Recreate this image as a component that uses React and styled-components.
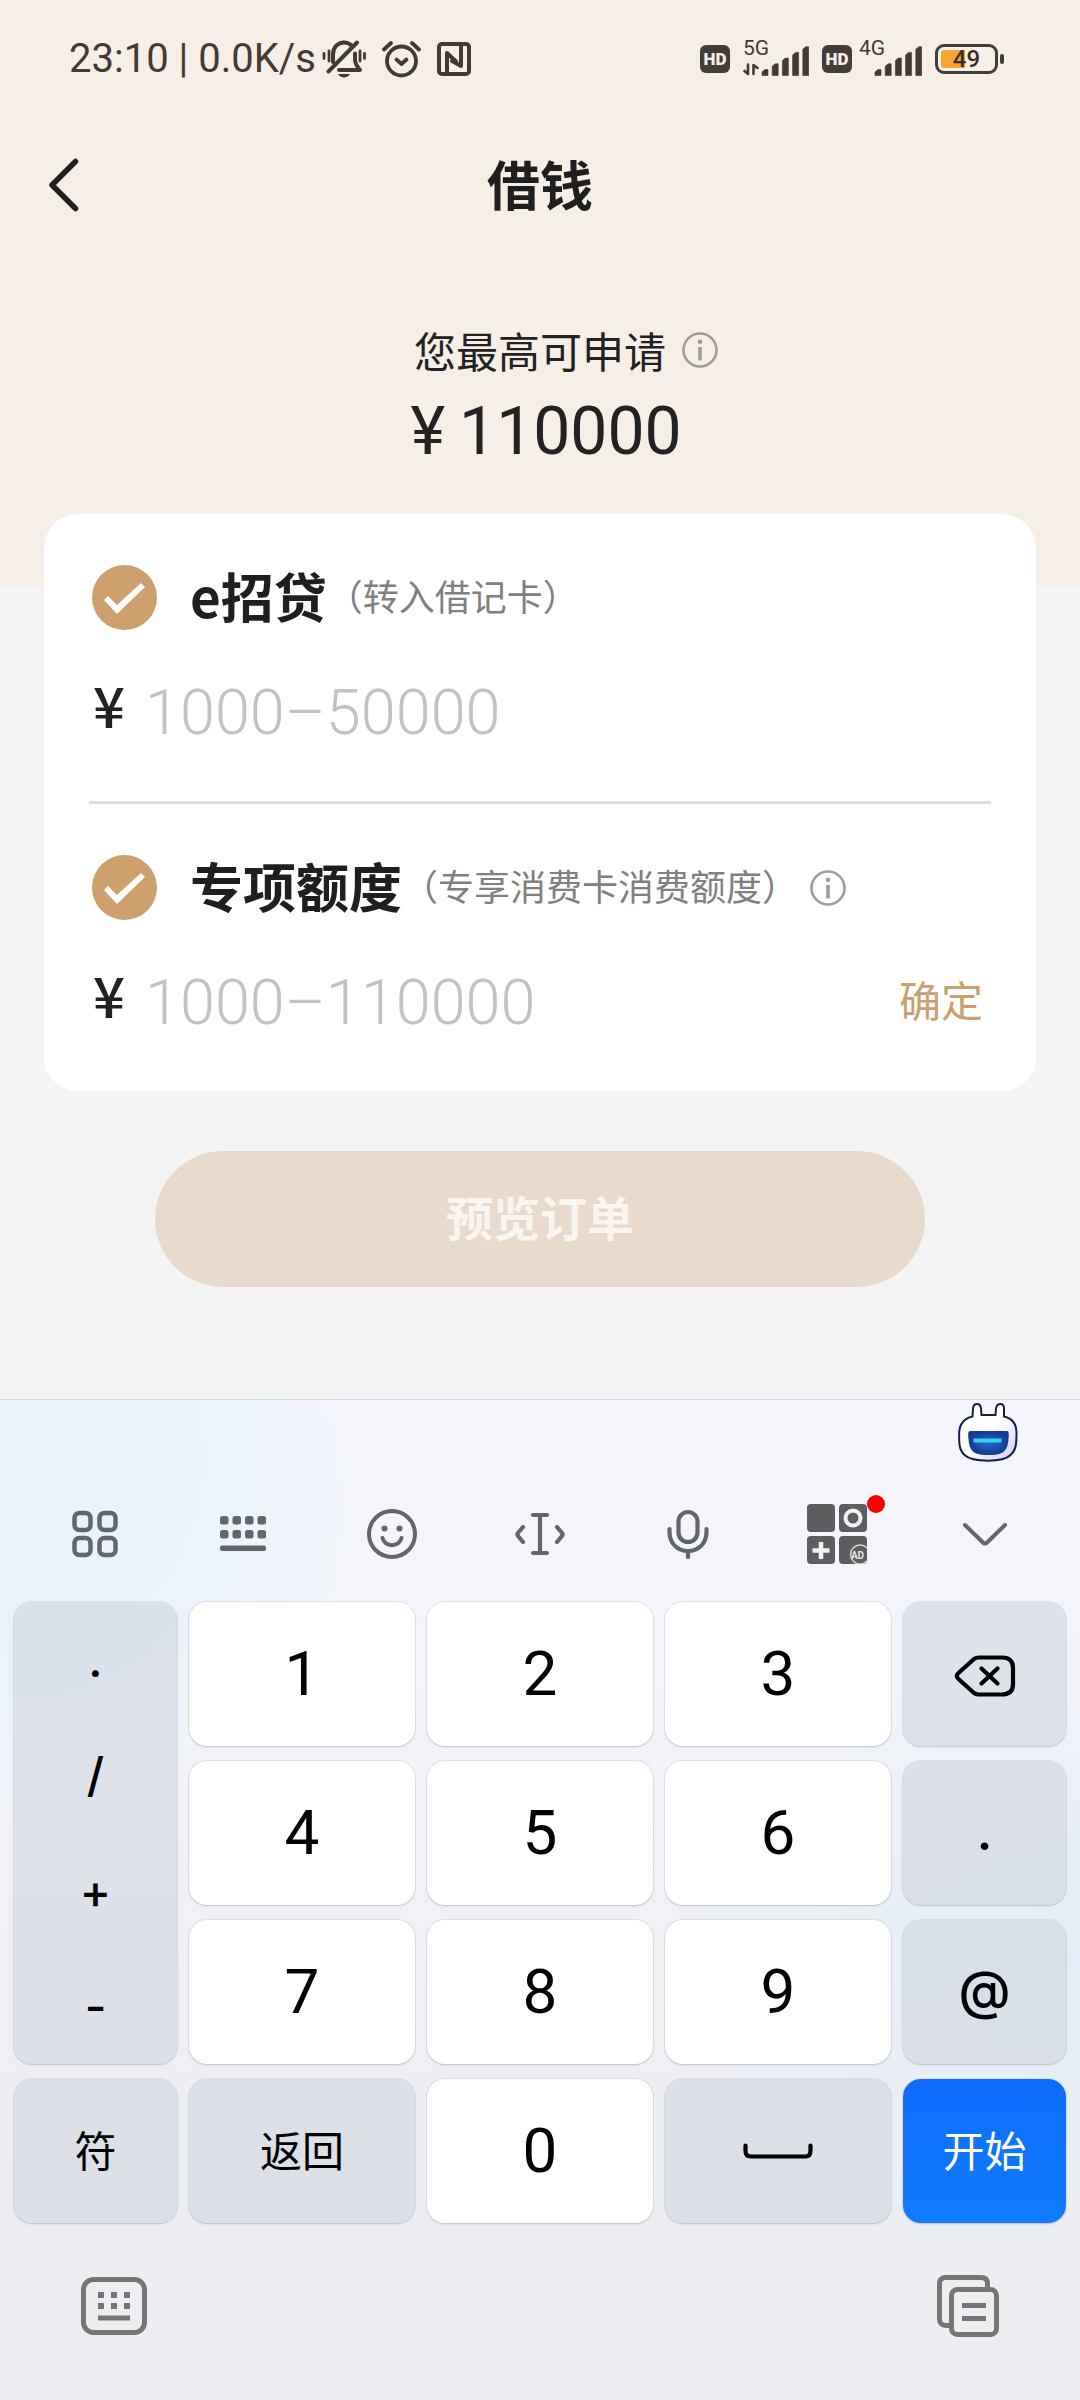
import React from "react";
import styled, { createGlobalStyle, css } from "styled-components";

const Global = createGlobalStyle`
  *, *::before, *::after { box-sizing: border-box; }
  html, body { margin: 0; padding: 0; }
  body {
    background: #f4f4f4;
    color: #222;
    font-family: "Noto Sans CJK SC", sans-serif;
  }
  button, input { font: inherit; color: inherit; border: 0; background: none; padding: 0; margin: 0; }
  button { cursor: pointer; }
  svg { display: block; }
`;

const Page = styled.div`
  display: flex;
  flex-direction: column;
  min-height: 100vh;
`;

/* ---------- status bar ---------- */

const StatusBar = styled.div`
  display: flex;
  align-items: center;
  justify-content: space-between;
  height: 118px;
  padding: 0 76px 0 69px;
  color: #433a34;
  font-family: Roboto, sans-serif;
`;

const StatusGroup = styled.div`
  display: flex;
  align-items: center;
  gap: ${(p) => p.$gap}px;
`;

const Clock = styled.span`
  font-size: 40px;
  line-height: 48px;
  white-space: pre;
`;

const HdBadge = styled.span`
  display: grid;
  place-items: center;
  width: 30px;
  height: 28px;
  border-radius: 6px;
  background: #433d38;
  color: #f6efe9;
  font-size: 17px;
  font-weight: 900;
  line-height: 28px;
`;

const SignalBox = styled.span`
  position: relative;
  height: 36px;
`;

const NetLabel = styled.span`
  position: absolute;
  top: -5px;
  left: 0;
  font-size: 21px;
  line-height: 24px;
`;

const Battery = styled.span`
  display: grid;
  place-items: center;
  width: 63px;
  height: 30px;
  padding: 3px;
  border: 3px solid #433d38;
  border-radius: 9px;
  background: linear-gradient(90deg, #f5a733 0 24px, transparent 24px) content-box;
  color: #3c2f22;
  font-size: 24px;
  font-weight: 500;
  line-height: 18px;
`;

const BatteryTip = styled.span`
  width: 4px;
  height: 10px;
  border-radius: 2px;
  background: #433d38;
`;

/* ---------- header ---------- */

const Hero = styled.header`
  padding-bottom: 114px;
  background: #f6efe8;
`;

const NavBar = styled.nav`
  display: grid;
  grid-template-columns: 1fr auto 1fr;
  align-items: center;
  height: 134px;
  padding: 0 44px;
`;

const BackButton = styled.button`
  justify-self: start;
`;

const PageTitle = styled.h1`
  margin: 0;
  padding-bottom: 4px;
  font-size: 53px;
  font-weight: 700;
  line-height: 72px;
  color: #1f1f1f;
`;

const LimitRow = styled.div`
  display: grid;
  grid-template-columns: 1fr auto 1fr;
  align-items: center;
  column-gap: 16px;
  padding-top: 70px;
  font-size: 42px;
  line-height: 56px;
  color: #222;
`;

const LimitText = styled.span`
  grid-column: 2;
`;

const IconButton = styled.button`
  display: grid;
  place-items: center;
  justify-self: start;
`;

const Amount = styled.div`
  display: flex;
  justify-content: center;
  gap: 14px;
  padding: 14px 0 0 12px;
  font-family: Roboto, sans-serif;
  font-size: 66px;
  line-height: 80px;
  color: #222;
`;

/* ---------- form ---------- */

const Form = styled.form`
  display: flex;
  flex-direction: column;
  align-items: center;
  gap: 60px;
  margin-top: -72px;
  padding: 0 44px 112px;
`;

const Card = styled.div`
  align-self: stretch;
  padding: 0 45px;
  border-radius: 34px;
  background: #fff;
`;

const Option = styled.section`
  padding: 51px 0 49px;
  & + & { border-top: 3px solid #dcdcdc; }
`;

const OptionHead = styled.div`
  display: flex;
  align-items: center;
  height: 65px;
  padding-left: 3px;
`;

const Check = styled.input`
  appearance: none;
  width: 65px;
  height: 65px;
  margin-right: 33px;
  border-radius: 50%;
  background: #d8c8b6;
  cursor: pointer;
  &::before {
    content: "";
    display: block;
    width: 65px;
    height: 65px;
    background: #fff;
    clip-path: polygon(12px 35px, 16px 31px, 25px 40px, 49px 18px, 53px 22px, 25px 49px);
  }
  &:checked { background: #cda06e; }
`;

const OptionLabel = styled.label`
  display: flex;
  align-items: center;
  margin-right: 12px;
  padding-bottom: 6px;
`;

const OptionName = styled.span`
  font-size: 53px;
  font-weight: 700;
  line-height: 64px;
  color: #1f1f1f;
`;

const OptionNote = styled.span`
  font-size: 36px;
  line-height: 48px;
  color: #808080;
`;

const AmountRow = styled.div`
  display: flex;
  align-items: center;
  height: 80px;
  margin-top: 42px;
  padding: 0 8px 0 4px;
`;

const Currency = styled.label`
  width: 52px;
  padding-bottom: 16px;
  font-size: 56px;
  font-weight: 500;
  line-height: 64px;
  color: #222;
`;

const AmountInput = styled.input`
  flex: 1;
  min-width: 0;
  height: 80px;
  outline: none;
  font-family: Roboto, sans-serif;
  font-size: 63px;
  font-weight: 300;
  &::placeholder { color: #c2c2c2; opacity: 1; }
`;

const ConfirmButton = styled.button`
  padding-bottom: 6px;
  font-size: 42px;
  line-height: 56px;
  color: #c9a06f;
`;

const Submit = styled.button`
  width: calc(100% - 222px);
  height: 136px;
  padding-bottom: 8px;
  border-radius: 68px;
  background: #e8dacd;
  color: #faf6f2;
  font-size: 47px;
  font-weight: 700;
`;

/* ---------- keyboard ---------- */

const Keyboard = styled.section`
  display: flex;
  flex-direction: column;
  flex: 1;
  border-top: 1px solid #d9dce1;
  background:
    radial-gradient(ellipse 380px 360px at 0 60px, #eaf2fb 0 50%, transparent 100%),
    radial-gradient(ellipse 420px 280px at 100% 560px, #e4edf7 0, transparent 100%),
    linear-gradient(#f5f6fb 0, #f3f5fa 220px, #edeef2 800px);
`;

const AssistantRow = styled.div`
  display: flex;
  justify-content: flex-end;
  align-items: flex-start;
  height: 66px;
  padding: 2px 62px 0;
`;

const Toolbar = styled.div`
  display: grid;
  grid-template-columns: repeat(7, 1fr);
  height: 136px;
  padding: 0 21px;
  color: #62666c;
`;

const Tool = styled.button`
  display: grid;
  place-items: center;
`;

const Badged = styled.span`
  position: relative;
`;

const Dot = styled.span`
  position: absolute;
  top: -9px;
  right: -18px;
  width: 18px;
  height: 18px;
  border-radius: 50%;
  background: #fb0000;
`;

const Keys = styled.div`
  display: grid;
  grid-template-columns: 163fr 226fr 226fr 226fr 163fr;
  grid-auto-rows: 144px;
  gap: 15px 12px;
  padding: 0 14px;
`;

const keySurface = css`
  border-radius: 18px;
  color: #000;
  box-shadow: 0 0 0 1px rgba(70, 85, 120, 0.09), 0 1px 2px rgba(70, 85, 120, 0.22);
`;

const tones = {
  light: "#ffffff",
  gray: "linear-gradient(rgba(206, 211, 221, 0.55), rgba(206, 211, 221, 0.55))",
  blue: "linear-gradient(#0f6dfe, #107bfe)",
};

const Key = styled.button`
  ${keySurface}
  display: grid;
  place-items: center;
  background: ${(p) => tones[p.$tone]};
  font-family: Roboto, sans-serif;
  font-size: 62px;
  line-height: 72px;
`;

const SignKey = styled(Key)`
  padding-bottom: 4px;
  font-family: Inter, sans-serif;
  font-size: 53px;
  font-weight: 500;
`;

const WordKey = styled(Key)`
  padding-bottom: 4px;
  color: ${(p) => (p.$tone === "blue" ? "#fff" : "#000")};
  font-family: "Noto Sans CJK SC", sans-serif;
  font-size: 42px;
`;

const SymbolColumn = styled.div`
  ${keySurface}
  display: grid;
  grid-row: span 3;
  grid-auto-rows: 1fr;
  background: ${tones.gray};
`;

const SymbolKey = styled.button`
  font-family: Inter, sans-serif;
  font-size: 47px;
  font-weight: 500;
  line-height: 60px;
`;

const Dock = styled.div`
  display: flex;
  justify-content: space-between;
  align-items: center;
  padding: 51px 81px 62px;
  color: #757575;
`;

/* ---------- drawings ---------- */

const line = { fill: "none", stroke: "currentColor", strokeLinecap: "round", strokeLinejoin: "round" };

const BellOff = () => (
  <svg width="44" height="38" viewBox="0 0 44 38" aria-hidden="true">
    <g {...line} strokeWidth="4">
      <path d="M11 22V14.500C11 7 16 2.500 22 2.500c3 0 5.500 1 7.500 3" />
      <path d="M33 13.500V20c0 3 1 5 5 10H17" />
      <path d="M35 2.500L6.500 31.500" />
      <path d="M2 13.500v5M7 11v10M38 11v10M42.500 13.500v5" strokeWidth="2.800" />
    </g>
    <path d="M16 34h12c-2 4.500-10 4.500-12 0z" fill="currentColor" />
  </svg>
);

const Alarm = () => (
  <svg width="39" height="38" viewBox="0 0 39 38" aria-hidden="true">
    <g {...line} strokeWidth="3.800">
      <circle cx="19.500" cy="21" r="14.500" />
      <path d="M2 9.500L9 3M37 9.500L30 3" />
      <path d="M14.500 19.500l5 4.500 5-4.500" />
    </g>
  </svg>
);

const Nfc = () => (
  <svg width="34" height="34" viewBox="0 0 34 34" aria-hidden="true">
    <g {...line} strokeWidth="4">
      <rect x="2" y="2" width="30" height="30" rx="3" />
      <path d="M10 31V11l9 8.500" />
      <path d="M24 4v20l-9-5" />
    </g>
  </svg>
);

const Bars = ({ arrows }) => (
  <svg width={arrows ? 66 : 63} height="36" viewBox={arrows ? "0 0 66 36" : "3 0 63 36"} aria-hidden="true">
    {[0, 1, 2, 3, 4].map((i) => {
      const x = 19 + i * 10.200;
      const top = 28 - i * 5.700;
      return <path key={i} d={`M${x} 34.500V${top + 3}l3-2.500h3V34.500z`} fill="currentColor" stroke="currentColor" strokeWidth="0.600" strokeLinejoin="round" />;
    })}
    {arrows && <path d="M5 23.500v9.500L1.500 30M10.500 33V24l4 3" {...line} strokeWidth="2.600" />}
  </svg>
);

const Info = () => (
  <svg width="36" height="36" viewBox="0 0 36 36" aria-hidden="true">
    <circle cx="18" cy="18" r="16.500" fill="none" stroke="#a09c99" strokeWidth="2.600" />
    <circle cx="18" cy="9.700" r="2.300" fill="#a09c99" />
    <path d="M18 15v13.500" stroke="#a09c99" strokeWidth="3.600" />
  </svg>
);

const Back = () => (
  <svg width="40" height="60" viewBox="0 0 40 60" aria-hidden="true">
    <path d="M31.500 6.500L8 30l23.500 23.500" {...line} stroke="#1f1f1f" strokeWidth="5.500" />
  </svg>
);

const Robot = () => (
  <svg width="60" height="62" viewBox="0 0 60 62" aria-hidden="true">
    <defs>
      <linearGradient id="shell" x1="0" y1="0" x2="1" y2="1">
        <stop offset="0.500" stopColor="#fff" />
        <stop offset="1" stopColor="#c9cdf2" />
      </linearGradient>
      <radialGradient id="visor">
        <stop offset="0" stopColor="#2168c8" />
        <stop offset="1" stopColor="#153a96" />
      </radialGradient>
    </defs>
    <path
      d="M14.500 14.500l.5-8c.5-6 7.500-6 8 0l.5 6.500h14l.5-6.500c1-6 8-6 8 0l0 8c9 2 12.500 8 12.500 16.500 0 9 0 17-6 22-7 7.500-38 7.500-46 0C.8 48 1 40 1.200 31 1.500 22 6 16.500 14.500 14.500z"
      fill="url(#shell)" stroke="#171d49" strokeWidth="2"
    />
    <path d="M12 29h37c2 0 2 3 1.500 8-.5 8-3 13-8 14.500-6 2-18 2-24 0-5-1.500-7.500-6.500-8-14.500C10 32 10 29 12 29z" fill="url(#visor)" />
    <path d="M15.500 38.500h28" stroke="#36d3ea" strokeWidth="4" />
  </svg>
);

const Grid = () => (
  <svg width="46" height="48" viewBox="0 0 46 48" aria-hidden="true">
    <g {...line} strokeWidth="4.500">
      <rect x="2.500" y="3" width="16" height="17" rx="5" />
      <rect x="27.500" y="3" width="16" height="17" rx="5" />
      <rect x="2.500" y="28" width="16" height="17" rx="5" />
      <rect x="27.500" y="28" width="16" height="17" rx="5" />
    </g>
  </svg>
);

const KeyGrid = () => (
  <svg width="46" height="36" viewBox="0 0 46 36" fill="currentColor" aria-hidden="true">
    {[0, 12.500, 25, 37.500].map((x) => (
      <React.Fragment key={x}>
        <rect x={x} y="0" width="8.500" height="8.500" rx="2.500" />
        <rect x={x} y="14" width="8.500" height="8.500" rx="2.500" />
      </React.Fragment>
    ))}
    <rect x="0" y="29.500" width="46" height="5.500" rx="2" />
  </svg>
);

const Smile = () => (
  <svg width="50" height="50" viewBox="0 0 50 50" aria-hidden="true">
    <g {...line} strokeWidth="4">
      <circle cx="25" cy="25" r="23" />
      <path d="M15.500 29c3 9.500 16 9.500 19 0" />
    </g>
    <circle cx="17.500" cy="19.500" r="3" fill="currentColor" />
    <circle cx="32.500" cy="19.500" r="3" fill="currentColor" />
  </svg>
);

const TextCursor = () => (
  <svg width="50" height="44" viewBox="0 0 50 44" aria-hidden="true">
    <g {...line} strokeWidth="4.200">
      <path d="M18 3h14M18 41h14M25 3v38M8 15l-5 6q-1 1.500 0 3l5 6M42 15l5 6q1 1.500 0 3l-5 6" />
    </g>
  </svg>
);

const Mic = () => (
  <svg width="42" height="50" viewBox="0 0 42 50" aria-hidden="true">
    <g {...line} strokeWidth="4.200">
      <rect x="11.500" y="3" width="19" height="30" rx="9.500" />
      <path d="M2.500 20v3c0 11 7.500 19 18.500 19s18.500-8 18.500-19v-3M21 42v6" />
    </g>
  </svg>
);

const Apps = () => (
  <svg width="60" height="60" viewBox="0 0 60 60" aria-hidden="true">
    <g fill="#5d5e60">
      <rect width="28" height="28" rx="4" />
      <rect x="32" width="28" height="28" rx="4" />
      <rect y="32" width="28" height="28" rx="4" />
      <rect x="32" y="32" width="28" height="28" rx="4" />
    </g>
    <circle cx="46" cy="14" r="7.500" fill="none" stroke="#f1f2f5" strokeWidth="4" />
    <path d="M14 38v17M5.500 46.500h17" stroke="#f1f2f5" strokeWidth="4.500" />
    <path d="M60 44a9.500 9.500 0 1 0 0 13" fill="none" stroke="#d4d4d6" strokeWidth="1.500" />
    <text x="50.500" y="54.500" textAnchor="middle" fill="#e4e4e6" fontFamily="Roboto, sans-serif" fontWeight="700" fontSize="10">AD</text>
  </svg>
);

const Down = () => (
  <svg width="46" height="24" viewBox="0 0 46 24" aria-hidden="true">
    <path d="M3 3l18.500 18q1.500 1 3 0L43 3" {...line} strokeWidth="4" />
  </svg>
);

const Backspace = () => (
  <svg width="68" height="48" viewBox="-4 -5 68 48" aria-hidden="true">
    <g {...line} strokeWidth="4.200">
      <path d="M24 2.500h23c7 0 11 3.500 11 10.500v16c0 7-4 10.500-11 10.500H24c-2 0-3.500-.5-5-1.500L3.500 24q-3.500-3 0-6L19 4c1.500-1 3-1.500 5-1.500z" />
      <path d="M26.500 13.500l16 15M42.500 13.500l-16 15" />
    </g>
  </svg>
);

const SpaceMark = () => (
  <svg width="70" height="16" viewBox="0 0 70 16" aria-hidden="true">
    <path d="M2.500 2.500v5c0 4 2 6 5 6h55c3 0 5-2 5-6v-5" {...line} strokeWidth="4.200" />
  </svg>
);

const SwitchKeyboard = () => (
  <svg width="66" height="58" viewBox="0 0 66 58" aria-hidden="true">
    <rect x="2.500" y="2.500" width="61" height="53" rx="10" fill="none" stroke="currentColor" strokeWidth="5" />
    <path d="M17 18h6M30 18h6M43 18h6M17 29h6M30 29h6M43 29h6" stroke="currentColor" strokeWidth="6" />
    <path d="M17 41h32" stroke="currentColor" strokeWidth="5" />
  </svg>
);

const Clipboard = () => (
  <svg width="62" height="64" viewBox="0 0 62 64" aria-hidden="true">
    <g fill="none" stroke="currentColor" strokeWidth="5">
      <path d="M12 51.500H9c-4 0-6.500-2.500-6.500-6.500V9.500C2.500 5.500 5 3.500 9 3.500h35c4 0 6.500 2 6.500 6V13" />
      <rect x="14.500" y="15.500" width="45" height="45" rx="6" />
      <path d="M25 31.500h24M25 44.500h24" />
    </g>
  </svg>
);

/* ---------- page ---------- */

function LoanOption({ id, name, note, placeholder, info, confirm }) {
  return (
    <Option>
      <OptionHead>
        <Check type="checkbox" id={`${id}-on`} defaultChecked />
        <OptionLabel htmlFor={`${id}-on`}>
          <OptionName>{name}</OptionName>
          <OptionNote>{note}</OptionNote>
        </OptionLabel>
        {info && (
          <IconButton type="button" aria-label="说明">
            <Info />
          </IconButton>
        )}
      </OptionHead>
      <AmountRow>
        <Currency htmlFor={`${id}-amount`}>¥</Currency>
        <AmountInput id={`${id}-amount`} inputMode="numeric" placeholder={placeholder} />
        {confirm && <ConfirmButton type="button">{confirm}</ConfirmButton>}
      </AmountRow>
    </Option>
  );
}

const tools = [
  ["功能", Grid],
  ["键盘", KeyGrid],
  ["表情", Smile],
  ["光标", TextCursor],
  ["语音", Mic],
  ["应用", Apps, true],
  ["收起", Down],
];

const Digit = ({ n }) => <Key type="button" $tone="light">{n}</Key>;

export default function App() {
  return (
    <Page>
      <Global />
      <Hero>
        <StatusBar>
          <StatusGroup $gap={16}>
            <StatusGroup $gap={6}>
              <Clock>23:10 | 0.0K/s</Clock>
              <BellOff />
            </StatusGroup>
            <Alarm />
            <Nfc />
          </StatusGroup>
          <StatusGroup $gap={13}>
            <StatusGroup $gap={13}>
              <HdBadge>HD</HdBadge>
              <SignalBox>
                <Bars arrows />
                <NetLabel>5G</NetLabel>
              </SignalBox>
            </StatusGroup>
            <StatusGroup $gap={7}>
              <HdBadge>HD</HdBadge>
              <SignalBox>
                <Bars />
                <NetLabel>4G</NetLabel>
              </SignalBox>
            </StatusGroup>
            <StatusGroup $gap={2}>
              <Battery>49</Battery>
              <BatteryTip />
            </StatusGroup>
          </StatusGroup>
        </StatusBar>
        <NavBar>
          <BackButton type="button" aria-label="返回上一页">
            <Back />
          </BackButton>
          <PageTitle>借钱</PageTitle>
        </NavBar>
        <LimitRow>
          <LimitText>您最高可申请</LimitText>
          <IconButton type="button" aria-label="额度说明">
            <Info />
          </IconButton>
        </LimitRow>
        <Amount>
          <span>¥</span>
          <span>110000</span>
        </Amount>
      </Hero>

      <Form onSubmit={(e) => e.preventDefault()}>
        <Card>
          <LoanOption id="e-loan" name="e招贷" note="（转入借记卡）" placeholder="1000–50000" />
          <LoanOption
            id="special"
            name="专项额度"
            note="（专享消费卡消费额度）"
            placeholder="1000–110000"
            info
            confirm="确定"
          />
        </Card>
        <Submit type="submit">预览订单</Submit>
      </Form>

      <Keyboard aria-label="数字键盘">
        <AssistantRow>
          <IconButton type="button" aria-label="助手">
            <Robot />
          </IconButton>
        </AssistantRow>
        <Toolbar>
          {tools.map(([label, Icon, dot]) => (
            <Tool key={label} type="button" aria-label={label}>
              <Badged>
                <Icon />
                {dot && <Dot />}
              </Badged>
            </Tool>
          ))}
        </Toolbar>
        <Keys>
          <SymbolColumn>
            {[".", "/", "+", "-"].map((s) => (
              <SymbolKey key={s} type="button">{s}</SymbolKey>
            ))}
          </SymbolColumn>
          <Digit n="1" />
          <Digit n="2" />
          <Digit n="3" />
          <Key type="button" $tone="gray" aria-label="删除">
            <Backspace />
          </Key>
          <Digit n="4" />
          <Digit n="5" />
          <Digit n="6" />
          <SignKey type="button" $tone="gray">.</SignKey>
          <Digit n="7" />
          <Digit n="8" />
          <Digit n="9" />
          <SignKey type="button" $tone="gray">@</SignKey>
          <WordKey type="button" $tone="gray">符</WordKey>
          <WordKey type="button" $tone="gray">返回</WordKey>
          <Digit n="0" />
          <Key type="button" $tone="gray" aria-label="空格">
            <SpaceMark />
          </Key>
          <WordKey type="button" $tone="blue">开始</WordKey>
        </Keys>
        <Dock>
          <IconButton type="button" aria-label="切换键盘">
            <SwitchKeyboard />
          </IconButton>
          <IconButton type="button" aria-label="剪贴板">
            <Clipboard />
          </IconButton>
        </Dock>
      </Keyboard>
    </Page>
  );
}
